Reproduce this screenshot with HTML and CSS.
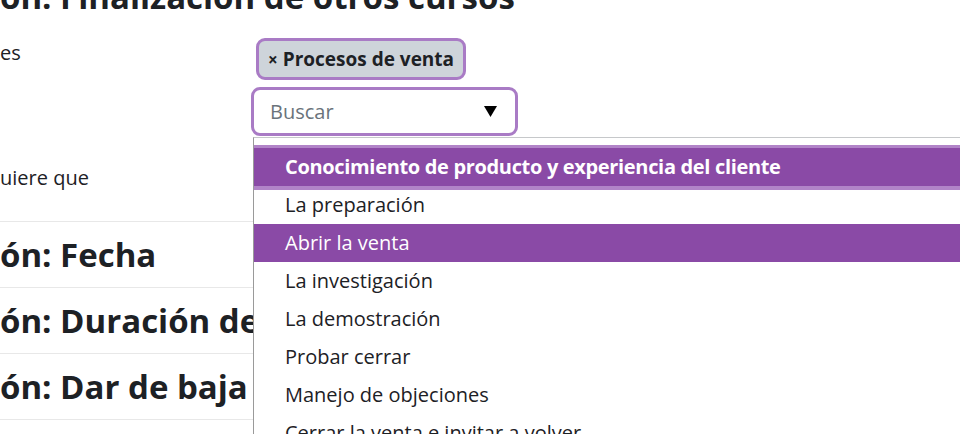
FILE: index.html
```html
<!DOCTYPE html>
<html lang="es">
<head>
<meta charset="utf-8">
<title>Condiciones</title>
<link rel="stylesheet" href="styles.css">
</head>
<body>
<div class="page">
  <h2 class="top">ón: Finalización de otros cursos</h2>
  <div class="form-row">
    <div class="label label-first">es</div>
    <div class="field">
      <div class="chips"><span class="chip"><span class="x">×</span> Procesos de venta</span></div>
      <div class="select">
        <span class="placeholder">Buscar</span>
        <svg class="caret" width="13" height="11" viewBox="0 0 13 11"><polygon points="0,0 13,0 6.5,11" fill="#000"/></svg>
      </div>
    </div>
  </div>
  <div class="label label-second">uiere que</div>
  <h3 class="sec">ón: Fecha</h3>
  <h3 class="sec">ón: Duración de</h3>
  <h3 class="sec">ón: Dar de baja</h3>
  <div class="sec-end"></div>

  <ul class="dropdown">
    <li class="opt group">Conocimiento de producto y experiencia del cliente</li>
    <li class="opt">La preparación</li>
    <li class="opt active">Abrir la venta</li>
    <li class="opt">La investigación</li>
    <li class="opt">La demostración</li>
    <li class="opt">Probar cerrar</li>
    <li class="opt">Manejo de objeciones</li>
    <li class="opt">Cerrar la venta e invitar a volver</li>
  </ul>
</div>
</body>
</html>
```

FILE: styles.css
```css
html, body {
  margin: 0;
  padding: 0;
  background: #fff;
  overflow: hidden;
}
body {
  font-family: "Open Sans", "Liberation Sans", sans-serif;
  color: #1d2125;
  width: 960px;
  height: 434px;
}
.page {
  position: relative;
  display: flow-root;
  height: 434px;
}
.top {
  margin: -23px 0 0;
  font-size: 33px;
  line-height: 40px;
  font-weight: 700;
  white-space: nowrap;
}
.form-row {
  display: grid;
  grid-template-columns: 251px 270px;
  margin-top: 21px;
}
.label {
  font-size: 20px;
  line-height: 30px;
  white-space: nowrap;
}
.label-first {
  padding-top: 0;
}
.label-second {
  margin-top: 27px;
  padding-bottom: 28px;
}
.field {
  display: flex;
  flex-direction: column;
  gap: 7px;
}
.chips {
  padding-left: 5px;
}
.chip {
  display: inline-flex;
  align-items: center;
  box-sizing: border-box;
  height: 42px;
  padding: 0 9px 0 9px;
  background: #ced4da;
  border: 3px solid #a97bc5;
  border-radius: 9px;
  font-weight: 700;
  font-size: 19px;
  color: #1d2125;
}
.chip .x {
  font-size: 17px;
  margin-right: 5px;
}
.select {
  box-sizing: border-box;
  width: 267px;
  height: 49px;
  border: 3px solid #a97bc5;
  border-radius: 9px;
  display: flex;
  align-items: center;
  justify-content: space-between;
  padding: 0 18px 0 16px;
  background: #fff;
}
.placeholder {
  color: #6a737b;
  font-size: 20px;
}
.caret {
  display: block;
}
.sec {
  margin: 0;
  width: 254px;
  height: 65px;
  border-top: 1px solid #e8e8e8;
  display: flex;
  align-items: center;
  font-size: 33px;
  font-weight: 700;
  white-space: nowrap;
  overflow: hidden;
}
.sec-end {
  width: 254px;
  border-top: 1px solid #e8e8e8;
}
.dropdown {
  position: absolute;
  left: 253px;
  top: 137px;
  width: 760px;
  margin: 0;
  padding: 10px 0 0;
  list-style: none;
  background: #fff;
  border-top: 1px solid #c6c8ca;
  border-left: 1px solid #9a9a9a;
}
.opt {
  height: 38px;
  line-height: 38px;
  padding-left: 31px;
  font-size: 20px;
  white-space: nowrap;
}
.group {
  position: relative;
  z-index: 1;
  background: #8a4aa6;
  color: #fff;
  font-weight: 700;
  letter-spacing: -0.33px;
  box-shadow: 0 -3px 0 #b184c8, 0 4px 0 #b184c8;
}
.active {
  background: #8a4aa6;
  color: #fff;
}
```
